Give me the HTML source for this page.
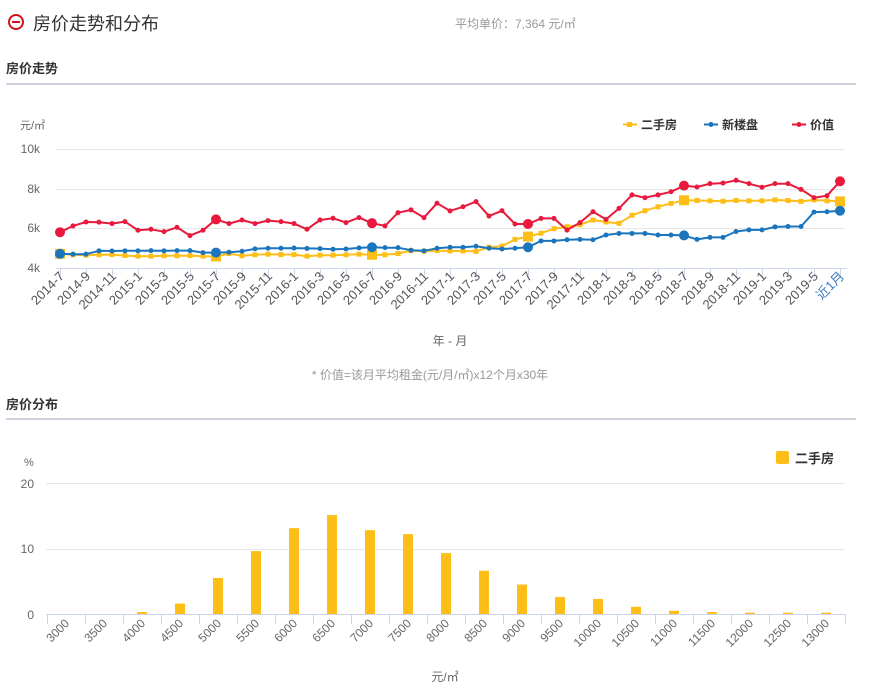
<!DOCTYPE html>
<html><head><meta charset="utf-8"><style>
body{margin:0;background:#fff;width:875px;height:689px;overflow:hidden;font-family:"Liberation Sans","Noto Sans CJK SC",sans-serif;position:relative}
.a{position:absolute;white-space:nowrap}
</style></head><body>
<svg class="a" style="left:7px;top:13px" width="18" height="18" viewBox="0 0 18 18"><circle cx="9" cy="9" r="7" fill="none" stroke="#d0121b" stroke-width="2"/><rect x="5" y="8" width="8" height="2" fill="#d0121b"/></svg>
<div class="a" style="left:33px;top:10px;font-size:18px;color:#333">房价走势和分布</div>
<div class="a" style="left:455px;top:15px;font-size:12px;color:#999">平均单价：7,364 元/㎡</div>
<div class="a" style="left:6px;top:58px;font-size:13px;font-weight:bold;color:#333">房价走势</div>
<div class="a" style="left:6px;top:83px;width:850px;height:2px;background:#d0d3de"></div>
<div class="a" style="left:6px;top:394px;font-size:13px;font-weight:bold;color:#333">房价分布</div>
<div class="a" style="left:6px;top:418px;width:850px;height:2px;background:#d0d3de"></div>
<svg class="a" style="left:0;top:0" width="875" height="689" id="s" font-family="Liberation Sans, Noto Sans CJK SC, sans-serif">
<g stroke="#e6e6e6" stroke-width="1">
<line x1="56" y1="149.5" x2="845" y2="149.5"/><line x1="56" y1="189.5" x2="845" y2="189.5"/><line x1="56" y1="228.5" x2="845" y2="228.5"/>
<line x1="46" y1="483.5" x2="845" y2="483.5"/><line x1="46" y1="549.5" x2="845" y2="549.5"/>
</g>
<line x1="56" y1="268.5" x2="847" y2="268.5" stroke="#ccd6eb"/>
<line x1="46" y1="614.5" x2="846" y2="614.5" stroke="#ccd6eb"/>
<g id="ticks" stroke="#ccd6eb"></g>
<g font-size="12" fill="#666" text-anchor="end">
<text x="40" y="153">10k</text><text x="40" y="193">8k</text><text x="40" y="232">6k</text><text x="40" y="272">4k</text>
<text x="34" y="488">20</text><text x="34" y="553">10</text><text x="34" y="619">0</text>
</g>
<text x="20" y="129" font-size="11" fill="#666">元/㎡</text>
<text x="24" y="466" font-size="11" fill="#666">%</text>
<g font-size="12" font-weight="bold" fill="#333">
<line x1="623" y1="124.5" x2="637" y2="124.5" stroke="#fdbe17" stroke-width="2"/><rect x="627" y="122" width="5" height="5" fill="#fdbe17"/><text x="641" y="129">二手房</text>
<line x1="704" y1="124.5" x2="718" y2="124.5" stroke="#1a75bc" stroke-width="2"/><circle cx="711" cy="124.5" r="2.5" fill="#1a75bc"/><text x="722" y="129">新楼盘</text>
<line x1="792" y1="124.5" x2="806" y2="124.5" stroke="#e8193c" stroke-width="2"/><circle cx="799" cy="124.5" r="2.5" fill="#e8193c"/><text x="810" y="129">价值</text>
</g>
<rect x="776" y="451" width="13" height="13" rx="2" fill="#fdbe17"/><text x="795" y="463" font-size="13" font-weight="bold" fill="#333">二手房</text>
<g id="lines"></g>
<g font-size="13" fill="#555" text-anchor="end" id="xl">
<text transform="translate(65,277) rotate(-45)">2014-7</text>
<text transform="translate(91,277) rotate(-45)">2014-9</text>
<text transform="translate(117,277) rotate(-45)">2014-11</text>
<text transform="translate(143,277) rotate(-45)">2015-1</text>
<text transform="translate(169,277) rotate(-45)">2015-3</text>
<text transform="translate(195,277) rotate(-45)">2015-5</text>
<text transform="translate(221,277) rotate(-45)">2015-7</text>
<text transform="translate(247,277) rotate(-45)">2015-9</text>
<text transform="translate(273,277) rotate(-45)">2015-11</text>
<text transform="translate(299,277) rotate(-45)">2016-1</text>
<text transform="translate(325,277) rotate(-45)">2016-3</text>
<text transform="translate(351,277) rotate(-45)">2016-5</text>
<text transform="translate(377,277) rotate(-45)">2016-7</text>
<text transform="translate(403,277) rotate(-45)">2016-9</text>
<text transform="translate(429,277) rotate(-45)">2016-11</text>
<text transform="translate(455,277) rotate(-45)">2017-1</text>
<text transform="translate(481,277) rotate(-45)">2017-3</text>
<text transform="translate(507,277) rotate(-45)">2017-5</text>
<text transform="translate(533,277) rotate(-45)">2017-7</text>
<text transform="translate(559,277) rotate(-45)">2017-9</text>
<text transform="translate(585,277) rotate(-45)">2017-11</text>
<text transform="translate(611,277) rotate(-45)">2018-1</text>
<text transform="translate(637,277) rotate(-45)">2018-3</text>
<text transform="translate(663,277) rotate(-45)">2018-5</text>
<text transform="translate(689,277) rotate(-45)">2018-7</text>
<text transform="translate(715,277) rotate(-45)">2018-9</text>
<text transform="translate(741,277) rotate(-45)">2018-11</text>
<text transform="translate(767,277) rotate(-45)">2019-1</text>
<text transform="translate(793,277) rotate(-45)">2019-3</text>
<text transform="translate(819,277) rotate(-45)">2019-5</text>
<text transform="translate(845,277) rotate(-45)" fill="#3a7bbf">近1月</text>
</g>
<text x="450" y="345" font-size="12" fill="#666" text-anchor="middle">年 - 月</text>
<text x="430" y="379" font-size="12" fill="#999" text-anchor="middle">* 价值=该月平均租金(元/月/㎡)x12个月x30年</text>
<g font-size="12" fill="#666" text-anchor="end">
<text transform="translate(70,624) rotate(-45)">3000</text>
<text transform="translate(108,624) rotate(-45)">3500</text>
<text transform="translate(146,624) rotate(-45)">4000</text>
<text transform="translate(184,624) rotate(-45)">4500</text>
<text transform="translate(222,624) rotate(-45)">5000</text>
<text transform="translate(260,624) rotate(-45)">5500</text>
<text transform="translate(298,624) rotate(-45)">6000</text>
<text transform="translate(336,624) rotate(-45)">6500</text>
<text transform="translate(374,624) rotate(-45)">7000</text>
<text transform="translate(412,624) rotate(-45)">7500</text>
<text transform="translate(450,624) rotate(-45)">8000</text>
<text transform="translate(488,624) rotate(-45)">8500</text>
<text transform="translate(526,624) rotate(-45)">9000</text>
<text transform="translate(564,624) rotate(-45)">9500</text>
<text transform="translate(602,624) rotate(-45)">10000</text>
<text transform="translate(640,624) rotate(-45)">10500</text>
<text transform="translate(678,624) rotate(-45)">11000</text>
<text transform="translate(716,624) rotate(-45)">11500</text>
<text transform="translate(754,624) rotate(-45)">12000</text>
<text transform="translate(792,624) rotate(-45)">12500</text>
<text transform="translate(830,624) rotate(-45)">13000</text>
</g>
<text x="445" y="681" font-size="12" fill="#666" text-anchor="middle">元/㎡</text>
<g id="bars" fill="#fdbe17"></g>
</svg>
<script>
var NS="http://www.w3.org/2000/svg";
function el(p,t,a){var e=document.createElementNS(NS,t);for(var k in a)e.setAttribute(k,a[k]);p.appendChild(e);return e;}
var red=[5.81,6.13,6.33,6.32,6.25,6.35,5.91,5.96,5.84,6.06,5.64,5.91,6.46,6.25,6.43,6.25,6.4,6.35,6.25,5.96,6.43,6.52,6.3,6.55,6.27,6.13,6.8,6.94,6.55,7.28,6.89,7.1,7.36,6.63,6.9,6.23,6.23,6.51,6.51,5.92,6.3,6.85,6.46,7.02,7.7,7.56,7.7,7.86,8.17,8.1,8.27,8.3,8.44,8.27,8.09,8.27,8.27,7.98,7.56,7.66,8.39];
var yel=[4.72,4.67,4.65,4.67,4.68,4.63,4.6,4.6,4.62,4.62,4.63,4.6,4.58,4.73,4.62,4.67,4.7,4.68,4.68,4.6,4.65,4.65,4.67,4.7,4.67,4.67,4.73,4.88,4.85,4.88,4.86,4.86,4.84,5.05,5.11,5.45,5.59,5.76,5.99,6.09,6.19,6.43,6.33,6.26,6.67,6.9,7.1,7.27,7.43,7.42,7.4,7.38,7.42,7.4,7.4,7.45,7.42,7.37,7.45,7.4,7.37];
var blu=[4.72,4.7,4.7,4.87,4.86,4.87,4.87,4.88,4.87,4.88,4.88,4.78,4.78,4.8,4.85,4.97,5.0,5.0,5.01,4.99,4.98,4.95,4.96,5.02,5.05,5.03,5.03,4.9,4.87,5.0,5.05,5.05,5.1,5.0,4.96,5.0,5.05,5.37,5.37,5.43,5.45,5.43,5.67,5.75,5.75,5.75,5.67,5.67,5.65,5.45,5.55,5.55,5.85,5.93,5.93,6.08,6.1,6.1,6.83,6.85,6.9];
var g=document.getElementById("lines"),tk=document.getElementById("ticks");
for(var k=0;k<=30;k++){var x=60+26*k+.5;el(tk,"line",{x1:x,y1:268,x2:x,y2:278});}
for(var k=0;k<=21;k++){var x=47+38*k+.5;el(tk,"line",{x1:x,y1:614,x2:x,y2:624});}
function X(i){return 60+13*i;}function Y(v){return 268-(v-4)*19.75;}
[[yel,"#fdbe17","sq"],[blu,"#1a75bc","c"],[red,"#e8193c","c"]].forEach(function(s){
 var pts=s[0].map(function(v,i){return X(i).toFixed(1)+","+Y(v).toFixed(1)}).join(" ");
 el(g,"polyline",{points:pts,fill:"none",stroke:s[1],"stroke-width":2,"stroke-linejoin":"round"});
 s[0].forEach(function(v,i){var big=i%12==0;var x=X(i),y=Y(v);
  if(s[2]=="sq"){var r=big?5:2.5;el(g,"rect",{x:x-r,y:y-r,width:2*r,height:2*r,fill:s[1]});}
  else el(g,"circle",{cx:x,cy:y,r:big?5:2.5,fill:s[1]});});
});
var bv=[0,0,0.3,1.6,5.5,9.6,13.1,15.1,12.8,12.2,9.3,6.6,4.5,2.6,2.3,1.1,0.5,0.3,0.2,0.2,0.2];
var b=document.getElementById("bars");
bv.forEach(function(v,i){if(v>0){var h=v*6.55;el(b,"rect",{x:47+38*i+14,y:614-h,width:10,height:h});}});
</script>
</body></html>
